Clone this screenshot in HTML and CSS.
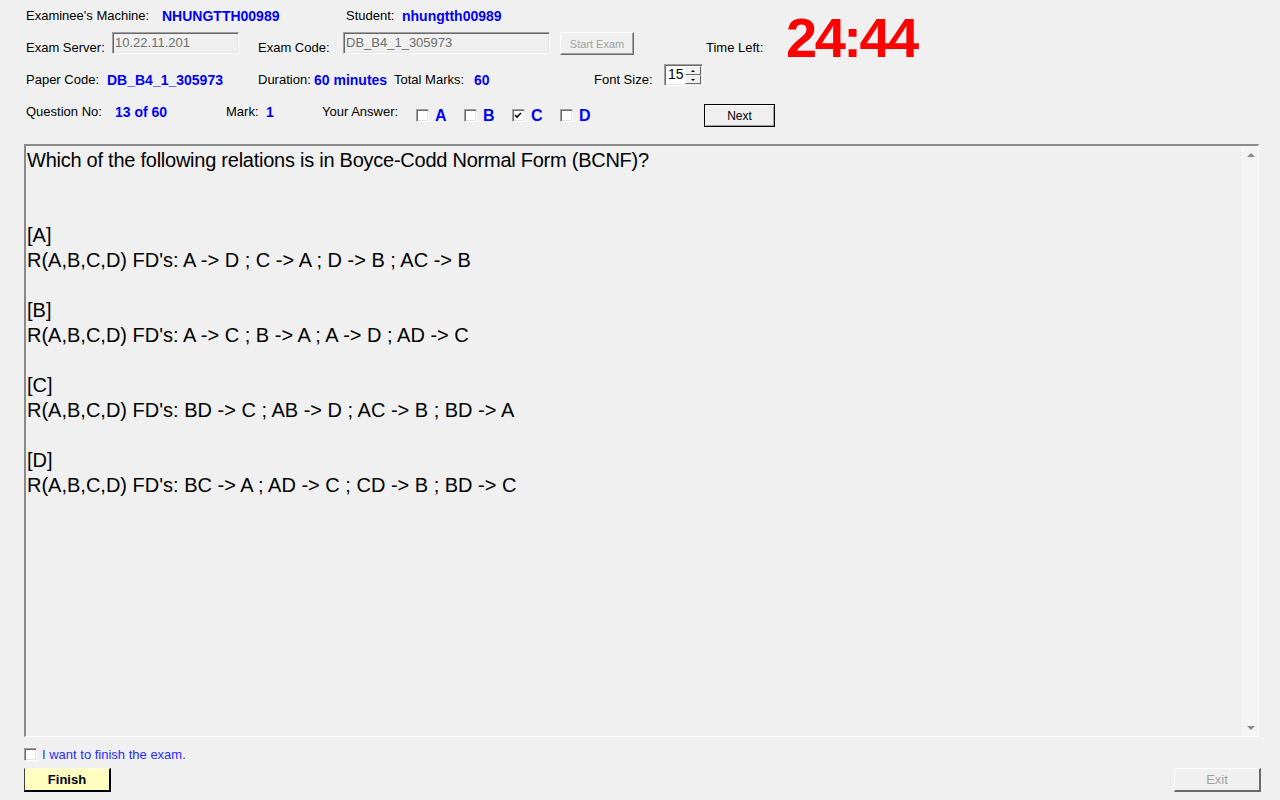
FILE: index.html
```html
<!DOCTYPE html>
<html>
<head>
<meta charset="utf-8">
<title>Exam</title>
<link rel="stylesheet" href="styles.css">
</head>
<body>
<div class="app">
  <div class="header">
    <div class="top">
      <div class="top-left">
        <div class="row row1">
          <span class="lbl l-machine">Examinee's Machine:</span>
          <span class="val v-machine">NHUNGTTH00989</span>
          <span class="lbl l-student">Student:</span>
          <span class="val">nhungtth00989</span>
        </div>
        <div class="row row2">
          <span class="lbl low l-server">Exam Server:</span>
          <span class="textbox tb-server">10.22.11.201</span>
          <span class="lbl low l-code">Exam Code:</span>
          <span class="textbox tb-code">DB_B4_1_305973</span>
          <span class="btn btn-disabled btn-start">Start Exam</span>
          <span class="lbl low l-time">Time Left:</span>
        </div>
      </div>
      <div class="timer">24:44</div>
    </div>

    <div class="row row3">
      <span class="lbl low l-paper">Paper Code:</span>
      <span class="val low v-paper">DB_B4_1_305973</span>
      <span class="lbl low l-duration">Duration:</span>
      <span class="val low v-duration">60 minutes</span>
      <span class="lbl low l-total">Total Marks:</span>
      <span class="val low v-total">60</span>
      <span class="lbl low l-font">Font Size:</span>
      <span class="spin">
        <span class="spin-val">15</span>
        <span class="spin-btns">
          <span class="spin-btn"><span class="tri-up"></span></span>
          <span class="spin-btn"><span class="tri-down"></span></span>
        </span>
      </span>
    </div>

    <div class="row row4">
      <span class="lbl l-qno">Question No:</span>
      <span class="val v-qno">13 of 60</span>
      <span class="lbl l-mark">Mark:</span>
      <span class="val v-mark">1</span>
      <span class="lbl l-answer">Your Answer:</span>
      <span class="opt"><span class="chk"></span><span class="opt-letter">A</span></span>
      <span class="opt"><span class="chk"></span><span class="opt-letter">B</span></span>
      <span class="opt"><span class="chk"><svg class="tick" width="11" height="11" viewBox="0 0 11 11"><polyline points="2,5 4,7 8,3" fill="none" stroke="#000" stroke-width="1.6"/></svg></span><span class="opt-letter">C</span></span>
      <span class="opt"><span class="chk"></span><span class="opt-letter">D</span></span>
      <span class="btn btn-next">Next</span>
    </div>
  </div>

  <div class="qbox">
    <div class="qtext">
      <div class="line qline">Which of the following relations is in Boyce-Codd Normal Form (BCNF)?</div>
      <div class="line"></div>
      <div class="line"></div>
      <div class="line">[A]</div>
      <div class="line">R(A,B,C,D) FD's: A -&gt; D ; C -&gt; A ; D -&gt; B ; AC -&gt; B</div>
      <div class="line"></div>
      <div class="line">[B]</div>
      <div class="line">R(A,B,C,D) FD's: A -&gt; C ; B -&gt; A ; A -&gt; D ; AD -&gt; C</div>
      <div class="line"></div>
      <div class="line">[C]</div>
      <div class="line">R(A,B,C,D) FD's: BD -&gt; C ; AB -&gt; D ; AC -&gt; B ; BD -&gt; A</div>
      <div class="line"></div>
      <div class="line">[D]</div>
      <div class="line">R(A,B,C,D) FD's: BC -&gt; A ; AD -&gt; C ; CD -&gt; B ; BD -&gt; C</div>
    </div>
    <div class="vscroll">
      <span class="sarrow"><span class="tri-up dim"></span></span>
      <span class="strack"></span>
      <span class="sarrow"><span class="tri-down dim"></span></span>
    </div>
  </div>

  <div class="finish-check">
    <span class="chk"></span>
    <span class="finish-text">I want to finish the exam.</span>
  </div>

  <div class="bottom">
    <span class="btn btn-finish">Finish</span>
    <span class="btn btn-disabled btn-exit">Exit</span>
  </div>
</div>
</body>
</html>
```

FILE: styles.css
```css
* { box-sizing: border-box; }

html, body {
  margin: 0;
  padding: 0;
  background: #f0f0f0;
}

body {
  font-family: "Liberation Sans", Arial, sans-serif;
  font-size: 13px;
  color: #000;
  width: 1280px;
  height: 800px;
  overflow: hidden;
}

.app {
  display: flex;
  flex-direction: column;
}

.header {
  padding-top: 8px;
  display: flex;
  flex-direction: column;
}

.top {
  display: flex;
  height: 56px;
}

.top-left {
  width: 784px;
  display: flex;
  flex-direction: column;
}

.row {
  display: flex;
  align-items: flex-start;
  padding-left: 26px;
  white-space: nowrap;
}

.lbl {
  line-height: 16px;
  font-size: 13px;
}

.val {
  line-height: 16px;
  font-size: 14px;
  font-weight: bold;
  color: #0000ff;
}

.low { margin-top: 8px; }

/* row 1 */
.row1 { height: 16px; }
.l-machine { width: 136px; }
.v-machine { width: 184px; }
.l-student { width: 56px; }

/* row 2 */
.row2 { height: 23px; margin-top: 8px; }
.l-server { width: 86px; }
.l-code { width: 85px; margin-left: 19px; }
.l-time { margin-left: 72px; }

.textbox {
  height: 22px;
  background: #f0f0f0;
  color: #6d6d6d;
  font-size: 13px;
  line-height: 20px;
  padding-left: 2px;
  border-top: 1px solid #a0a0a0;
  border-left: 1px solid #a0a0a0;
  border-right: 1px solid #fff;
  border-bottom: 1px solid #fff;
  box-shadow: inset 1px 1px 0 #696969, inset -1px -1px 0 #e3e3e3;
}
.tb-server { width: 127px; }
.tb-code { width: 207px; }

.btn {
  display: flex;
  align-items: center;
  justify-content: center;
  background: #f0f0f0;
  border-top: 1px solid #fff;
  border-left: 1px solid #fff;
  border-right: 1px solid #696969;
  border-bottom: 1px solid #696969;
  box-shadow: inset -1px -1px 0 #a0a0a0;
}

.btn-disabled { color: #a0a0a0; }

.btn-start {
  width: 74px;
  height: 23px;
  margin-left: 10px;
  font-size: 11px;
}

.timer {
  margin-top: 6px;
  margin-left: 2px;
  font-size: 56px;
  line-height: 48px;
  font-weight: bold;
  color: #ff0000;
  letter-spacing: -2.5px;
}

/* row 3 */
.row3 { height: 22px; }
.l-paper { width: 81px; }
.v-paper { width: 151px; }
.l-duration { width: 56px; }
.v-duration { width: 80px; }
.l-total { width: 80px; }
.v-total { width: 120px; }
.l-font { width: 70px; }

.spin {
  width: 39px;
  height: 22px;
  display: flex;
  align-items: center;
  background: #fff;
  border-top: 1px solid #a0a0a0;
  border-left: 1px solid #a0a0a0;
  border-right: 1px solid #fff;
  border-bottom: 1px solid #fff;
  box-shadow: inset 1px 1px 0 #696969, inset -1px -1px 0 #e3e3e3;
}
.spin-val {
  width: 20px;
  padding-left: 3px;
  font-size: 14px;
  line-height: 16px;
  margin-top: -2px;
}
.spin-btns {
  display: flex;
  flex-direction: column;
  width: 16px;
  height: 18px;
}
.spin-btn {
  flex: 1;
  display: flex;
  align-items: center;
  justify-content: center;
  background: #f0f0f0;
  border-top: 1px solid #fff;
  border-left: 1px solid #fff;
  border-right: 1px solid #696969;
  border-bottom: 1px solid #696969;
}

.tri-up {
  width: 0; height: 0;
  border-left: 2px solid transparent;
  border-right: 2px solid transparent;
  border-bottom: 2px solid #000;
}
.tri-down {
  width: 0; height: 0;
  border-left: 2px solid transparent;
  border-right: 2px solid transparent;
  border-top: 2px solid #000;
}

/* row 4 */
.row4 { height: 23px; margin-top: 18px; }
.l-qno { width: 89px; }
.v-qno { width: 111px; }
.l-mark { width: 40px; }
.v-mark { width: 56px; }
.l-answer { width: 94px; }

.opt {
  display: flex;
  align-items: flex-start;
  width: 48px;
}
.opt .chk { margin-top: 5px; }

.chk {
  width: 13px;
  height: 13px;
  flex: none;
  background: #fff;
  border-top: 1px solid #a0a0a0;
  border-left: 1px solid #a0a0a0;
  border-right: 1px solid #fff;
  border-bottom: 1px solid #fff;
  box-shadow: inset 1px 1px 0 #696969, inset -1px -1px 0 #e3e3e3;
  display: flex;
  align-items: center;
  justify-content: center;
}
.tick { display: block; }

.opt-letter {
  margin-left: 6px;
  margin-top: 3px;
  font-size: 16px;
  line-height: 18px;
  font-weight: bold;
  color: #0000ff;
}

.btn-next {
  width: 71px;
  height: 23px;
  margin-left: 96px;
  font-size: 12px;
  border: 1px solid #000;
  box-shadow: inset 1px 1px 0 #fff, inset -1px -1px 0 #a0a0a0;
}

/* question box */
.qbox {
  margin-top: 17px;
  margin-left: 24px;
  width: 1235px;
  height: 593px;
  display: flex;
  border-top: 2px solid #8a8a8a;
  border-left: 2px solid #8a8a8a;
  border-right: 1px solid #fff;
  border-bottom: 1px solid #fff;
}

.qtext {
  flex: 1;
  padding: 2px 0 0 1px;
  font-size: 20px;
  line-height: 25px;
  color: #000;
  white-space: nowrap;
}

.line { height: 25px; }
.qline { letter-spacing: -0.25px; }

.vscroll {
  width: 16px;
  border-left: 1px solid #fff;
  background: #f4f4f4;
  display: flex;
  flex-direction: column;
}
.sarrow {
  height: 17px;
  display: flex;
  align-items: center;
  justify-content: center;
}
.strack { flex: 1; }
.tri-up.dim {
  border-left-width: 4px;
  border-right-width: 4px;
  border-bottom: 4px solid #8a8a8a;
}
.tri-down.dim {
  border-left-width: 4px;
  border-right-width: 4px;
  border-top: 4px solid #8a8a8a;
}

/* bottom */
.finish-check {
  margin-top: 11px;
  margin-left: 24px;
  height: 13px;
  display: flex;
  align-items: center;
}
.finish-text {
  margin-left: 5px;
  color: #2a2aff;
  font-size: 13px;
  line-height: 13px;
}

.bottom {
  margin-top: 7px;
  padding-left: 24px;
  padding-right: 19px;
  display: flex;
  justify-content: space-between;
}

.btn-finish {
  width: 87px;
  height: 24px;
  background: #ffffc0;
  font-weight: bold;
  font-size: 13px;
  border-top: 1px solid #ffffe8;
  border-left: 1px solid #404040;
  border-right: 2px solid #000;
  border-bottom: 2px solid #000;
  box-shadow: none;
}

.btn-exit {
  width: 87px;
  height: 24px;
  font-size: 13px;
  border-right: 2px solid #696969;
  border-bottom: 2px solid #696969;
  box-shadow: none;
}
```
